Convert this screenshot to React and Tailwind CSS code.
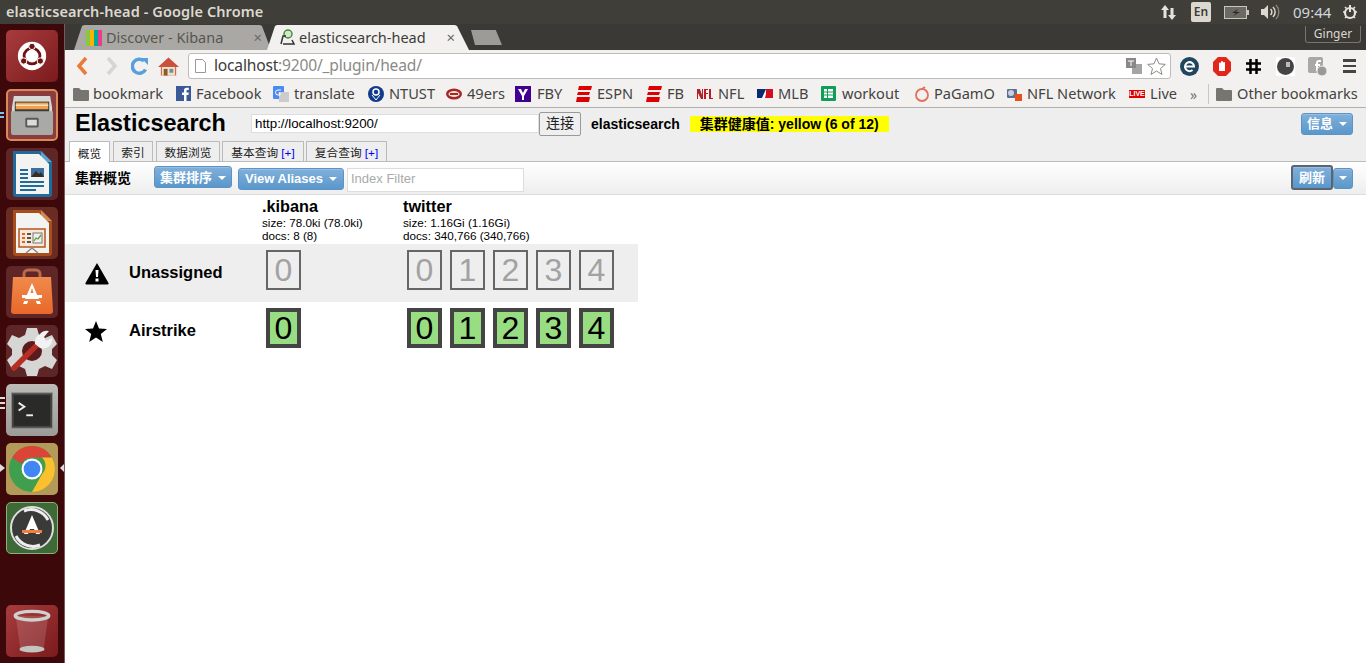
import React from "react";

const ubuntu = '"Noto Sans","Open Sans",sans-serif';

function Tile({ bg, ring, children }) {
  return (
    <div className={`w-[52px] h-[52px] rounded-[5px] flex items-center justify-center shrink-0 ${bg} ${ring || ""}`}>
      {children}
    </div>
  );
}

const UbuntuIcon = () => (
  <svg width="30" height="30" viewBox="0 0 36 36">
    <circle cx="18" cy="18" r="17" fill="#fff" />
    <circle cx="18" cy="18" r="9.5" fill="none" stroke="#6e1416" strokeWidth="3.4" />
    <circle cx="18" cy="6.500" r="3.8" fill="#6e1416" stroke="#fff" strokeWidth="1.2" />
    <circle cx="8" cy="24" r="3.8" fill="#6e1416" stroke="#fff" strokeWidth="1.2" />
    <circle cx="28" cy="24" r="3.8" fill="#6e1416" stroke="#fff" strokeWidth="1.2" />
  </svg>
);
const FilesIcon = () => (
  <svg width="42" height="44" viewBox="0 0 44 46">
    <path d="M3 3h38l2 12v28H1V15z" fill="#d8d8d4" />
    <rect x="4" y="9" width="36" height="12" fill="#3a3a38" />
    <rect x="5" y="10" width="34" height="7" fill="#f0a050" />
    <rect x="5" y="12" width="34" height="1.5" fill="#fbe6c0" />
    <path d="M0 19h44v22a3 3 0 0 1-3 3H3a3 3 0 0 1-3-3z" fill="#a9a9a6" />
    <rect x="15" y="26" width="14" height="10" rx="1.5" fill="#5a5a58" />
    <rect x="17" y="28" width="10" height="6" fill="#dcdcdc" />
  </svg>
);
const WriterIcon = () => (
  <svg width="42" height="48" viewBox="0 0 42 48">
    <path d="M2 1h28l11 11v32a3 3 0 0 1-3 3H5a3 3 0 0 1-3-3z" fill="#1f6b9c" />
    <path d="M30 1l11 11H30z" fill="#5aa6cf" />
    <path d="M5 4h23l10 10v30H5z" fill="#f3f3f1" />
    <path d="M9 20h8M9 24h8M9 28h8M9 32h24M9 36h24M9 40h16" stroke="#1f6b9c" strokeWidth="2" />
    <rect x="20" y="18" width="13" height="9" fill="#3b6fa0" />
    <path d="M20 27l5-6 3 3 2-2 3 5z" fill="#3a2d20" />
  </svg>
);
const ImpressIcon = () => (
  <svg width="42" height="48" viewBox="0 0 42 48">
    <path d="M2 1h28l11 11v32a3 3 0 0 1-3 3H5a3 3 0 0 1-3-3z" fill="#a84e1c" />
    <path d="M30 1l11 11H30z" fill="#cf8a55" />
    <path d="M5 4h23l10 10v30H5z" fill="#f3f3f1" />
    <rect x="8" y="20" width="26" height="18" fill="#fbe7d8" stroke="#b4551f" strokeWidth="1.5" />
    <path d="M11 25h3M11 29h3M11 33h3" stroke="#d9642a" strokeWidth="2" />
    <path d="M16 25h4M16 29h4M16 33h4" stroke="#555" strokeWidth="2" />
    <rect x="22" y="24" width="9" height="10" fill="#eee" stroke="#777" />
    <path d="M23 32l2-3 2 1 3-4" stroke="#5aa02c" strokeWidth="1.3" fill="none" />
    <path d="M15 44l6-5 6 5" stroke="#888" strokeWidth="1.5" fill="none" />
  </svg>
);
const StoreIcon = () => (
  <svg width="44" height="48" viewBox="0 0 44 48">
    <defs>
      <linearGradient id="bag" x1="0" y1="0" x2="0" y2="1">
        <stop offset="0" stopColor="#f08a4c" />
        <stop offset="1" stopColor="#e8682a" />
      </linearGradient>
    </defs>
    <path d="M14 10V6a4 4 0 0 1 4-4h8a4 4 0 0 1 4 4v4" fill="none" stroke="#b86a4a" strokeWidth="3" />
    <path d="M3 9h38l2 34a3 3 0 0 1-3 3H4a3 3 0 0 1-3-3z" fill="url(#bag)" />
    <path d="M22 15l-9 21h4l2-5h6l2 5h4z" fill="#fff" />
    <rect x="12" y="27" width="20" height="3" fill="#fff" />
    <rect x="12" y="31" width="20" height="2" fill="#ee7e3c" />
    <path d="M20.500 25h3L22 20z" fill="#ee7e3c" />
  </svg>
);
const SettingsIcon = () => (
  <svg width="50" height="50" viewBox="0 0 50 50">
    <path d="M20 2h10l2 7 6 3 7-3 5 9-5 5v6l5 5-5 9-7-3-6 3-2 7H20l-2-7-6-3-7 3-5-9 5-5v-6l-5-5 5-9 7 3 6-3z" fill="#d6d6d4" />
    <circle cx="25" cy="25" r="10" fill="#5b1a1c" />
    <path d="M7 42L31 18" stroke="#b52f24" strokeWidth="5.500" strokeLinecap="round" />
    <path d="M33 8a9 9 0 0 1 9-3l-5 6 2 4 6-3a9 9 0 0 1-12 10l-5-4a9 9 0 0 1 5-10z" fill="#f2f2f2" />
  </svg>
);
const TerminalIcon = () => (
  <svg width="42" height="37" viewBox="0 0 44 38">
    <rect x="0.5" y="0.5" width="43" height="37" fill="#444442" stroke="#8c8c88" />
    <rect x="3" y="3" width="38" height="32" fill="#2a2a28" />
    <path d="M8 11l6 4-6 4" stroke="#eee" strokeWidth="2" fill="none" />
    <path d="M16 24h7" stroke="#eee" strokeWidth="2" />
  </svg>
);
const ChromeIcon = ({ s = 46 }) => (
  <svg width={s} height={s} viewBox="0 0 44 44">
    <circle cx="22" cy="22" r="22" fill="#3f9f4f" />
    <path d="M22 0a22 22 0 0 1 19 11H22a11 11 0 0 0-10 6L3 11A22 22 0 0 1 22 0z" fill="#db4437" />
    <path d="M41 11a22 22 0 0 1-19 33l9.500-17a11 11 0 0 0 0-16z" fill="#fbc02d" />
    <circle cx="22" cy="22" r="10" fill="#fff" />
    <circle cx="22" cy="22" r="8" fill="#4285f4" />
  </svg>
);
const UpdaterIcon = () => (
  <svg width="44" height="44" viewBox="0 0 44 44">
    <circle cx="22" cy="22" r="21" fill="#3a3a38" stroke="#ddd" strokeWidth="2" />
    <path d="M22 9l-8 19h4l2-5h4l2 5h4z" fill="#fff" />
    <rect x="12" y="24" width="20" height="3" fill="#f08040" />
    <path d="M6 30a19 19 0 0 0 24 9" stroke="#eee" strokeWidth="3" fill="none" />
    <path d="M38 14A19 19 0 0 0 14 5" stroke="#eee" strokeWidth="3" fill="none" />
  </svg>
);
const TrashIcon = () => (
  <svg width="38" height="46" viewBox="0 0 38 48">
    <path d="M2 8l5 36q12 4 24 0l5-36z" fill="#ffffff" opacity="0.14" />
    <ellipse cx="19" cy="8" rx="17.500" ry="4.500" fill="none" stroke="#d0d0cc" strokeWidth="3.500" />
    <ellipse cx="19" cy="43" rx="13" ry="3.500" fill="#c4c4bf" />
  </svg>
);

const Folder = ({ c = "#77756f" }) => (
  <svg width="16" height="14" viewBox="0 0 16 14"><path d="M0 2a1 1 0 0 1 1-1h5l2 2h7a1 1 0 0 1 1 1v9a1 1 0 0 1-1 1H1a1 1 0 0 1-1-1z" fill={c} /></svg>
);
const Espn = () => (
  <svg width="16" height="16" viewBox="0 0 16 16"><path d="M3 0h13l-1 4H2zM2 6h12l-1 3H1zM1 11h13l-1 5H0z" fill="#d00" /></svg>
);
const bookmarks = [
  { w: 103, gap: 4, icon: <Folder />, t: "bookmark" },
  { w: 97, gap: 5, icon: <svg width="15" height="15" viewBox="0 0 15 15"><rect width="15" height="15" fill="#3b5998" /><path d="M10.500 15V9h2l.3-2.500h-2.300V5c0-.7.3-1 1-1h1.300V1.800h-2C8.700 1.800 8 3 8 4.700v1.800H6V9h2v6z" fill="#fff" /></svg>, t: "Facebook" },
  { w: 95, gap: 5, icon: <svg width="16" height="16" viewBox="0 0 16 16"><rect width="11" height="13" rx="1" fill="#4a8af4" /><rect x="6" y="6" width="10" height="10" fill="#ccc" /><path d="M8 4H5a2 2 0 0 0 0 5h2V7H5.500" stroke="#fff" fill="none" /></svg>, t: "translate" },
  { w: 78, gap: 5, icon: <svg width="16" height="16" viewBox="0 0 16 16"><circle cx="8" cy="8" r="8" fill="#123a8c" /><circle cx="8" cy="6" r="3" fill="none" stroke="#fff" strokeWidth="1.500" /><path d="M4 9l4 5 4-5" stroke="#fff" fill="none" /></svg>, t: "NTUST" },
  { w: 69, gap: 5, icon: <svg width="16" height="12" viewBox="0 0 16 12"><ellipse cx="8" cy="6" rx="8" ry="5.500" fill="#a8252c" /><ellipse cx="8" cy="6" rx="5.500" ry="3" fill="#f0e8d0" /><path d="M4 6h8" stroke="#a8252c" strokeWidth="2" /></svg>, t: "49ers" },
  { w: 61, gap: 6, icon: <svg width="16" height="16" viewBox="0 0 16 16"><rect width="16" height="16" fill="#400090" /><path d="M3 3h3l2 4 2-4h3l-4 7v4H7v-4z" fill="#fff" /></svg>, t: "FBY" },
  { w: 70, gap: 5, icon: <Espn />, t: "ESPN" },
  { w: 51, gap: 5, icon: <Espn />, t: "FB" },
  { w: 60, gap: 5, icon: <svg width="16" height="12" viewBox="0 0 16 12"><path d="M0 1h3l2 6V1h1v10H4L1 5v6H0zM7 1h4v1H9v3h2v1H9v5H7zM12 1h2v9h2v1h-4z" fill="#b3202a" /></svg>, t: "NFL" },
  { w: 64, gap: 5, icon: <svg width="16" height="9" viewBox="0 0 16 9"><rect width="16" height="9" fill="#fff" /><path d="M0 0h9L5 9H0z" fill="#0b2a6f" /><path d="M9 0h7v9H8l1-4z" fill="#d01020" /></svg>, t: "MLB" },
  { w: 93, gap: 6, icon: <svg width="15" height="15" viewBox="0 0 15 15"><rect width="15" height="15" rx="1" fill="#0f9d58" /><rect x="3" y="3" width="9" height="9" fill="#fff" /><path d="M3 6h9M3 9h9M6.500 3v9" stroke="#0f9d58" /></svg>, t: "workout" },
  { w: 92, gap: 4, icon: <svg width="16" height="16" viewBox="0 0 16 16"><circle cx="8" cy="9" r="6" fill="none" stroke="#e0725c" strokeWidth="1.800" /><path d="M8 3l3-2" stroke="#e0725c" strokeWidth="1.800" /></svg>, t: "PaGamO" },
  { w: 123, gap: 5, icon: <svg width="16" height="16" viewBox="0 0 16 16"><rect x="1" y="3" width="10" height="9" rx="1" fill="#5c6f90" /><circle cx="5" cy="7" r="3" fill="#c8d0de" /><rect x="9" y="8" width="7" height="7" fill="#e8501c" /></svg>, t: "NFL Network" },
  { w: 53, gap: 5, icon: <span className="w-[16px] h-[8px] bg-[#e00000] text-white text-[7px] leading-[8px] font-bold text-center [font-family:'Liberation_Sans',sans-serif]">LIVE</span>, t: "Live" },
];

const Caret = ({ className = "" }) => (
  <span className={`inline-block w-0 h-0 border-x-[4px] border-x-transparent border-t-[4px] border-t-white ${className}`} />
);

const BlueBtn = ({ children, className = "" }) => (
  <div className={`flex items-center justify-center gap-[6px] rounded-[3px] border border-[#5d93c4] bg-gradient-to-b from-[#80b0da] to-[#5a97cb] text-white font-bold text-[13px] shadow-[inset_0_1px_0_rgba(255,255,255,0.2)] ${className}`}>
    {children}
  </div>
);

const Shard = ({ n, on }) => (
  <div className={`w-[35px] h-[40px] flex items-center justify-center text-[32px] leading-none pb-[1px] mr-[8px] shrink-0 ${on ? "border-[4px] border-[#444] bg-[#98dd82] text-black" : "border-2 border-[#666] text-[#a2a2a2]"}`}>
    {n}
  </div>
);

const Row = ({ icon, label, gray }) => (
  <div className={`h-[58px] w-[573px] flex ${gray ? "bg-[#eeeeee]" : ""}`}>
    <div className="w-[64px] flex items-center pl-[20px]">{icon}</div>
    <div className="w-[133px] flex items-center pb-[2px] font-bold text-[16.500px] text-black">{label}</div>
    <div className="w-[141px] pt-[6px] pl-[4px] flex"><Shard n={0} on={!gray} /></div>
    <div className="pt-[6px] pl-[4px] flex">
      {[0, 1, 2, 3, 4].map((n) => <Shard key={n} n={n} on={!gray} />)}
    </div>
  </div>
);

export default function App() {
  return (
    <div className="w-[1366px] h-[663px] overflow-hidden flex flex-col bg-white [font-family:'Liberation_Sans','Noto_Sans_CJK_SC',sans-serif]">
      {/* top panel */}
      <div className="h-[24px] shrink-0 bg-[#3f3e39] flex items-center text-[#dcd8cf] relative" style={{ fontFamily: ubuntu }}>
        <span className="ml-[6px] text-[14.500px] font-semibold tracking-[0.1px]">elasticsearch-head - Google Chrome</span>
        <div className="ml-auto flex items-center">
          <svg width="17" height="17" viewBox="0 0 17 17"><path d="M5 1l4 5H6.500v8h-3V6H1zM12 16l-4-5h2.500V4h3v7H16z" fill="#e6e3dc" /></svg>
          <div className="ml-[14px] w-[20px] h-[20px] rounded-[2px] bg-[#dcd8d0] text-[#3c3b37] text-[12px] font-semibold flex items-center justify-center">En</div>
          <svg className="ml-[13px]" width="25" height="13" viewBox="0 0 25 13"><rect x="0.500" y="0.500" width="22" height="12" fill="#6a6964" stroke="#c8c5bd" /><rect x="23" y="4" width="2" height="5" fill="#c8c5bd" /><path d="M14 3l-6 4h4l-3 3 7-4h-4z" fill="#2c2b28" /></svg>
          <svg className="ml-[11px]" width="20" height="16" viewBox="0 0 20 16"><path d="M1 5h3l4-4v14l-4-4H1z" fill="#dcd8cf" /><path d="M10.500 5a4 4 0 0 1 0 6M13 3a7 7 0 0 1 0 10" stroke="#dcd8cf" strokeWidth="1.500" fill="none" /><path d="M16 1a10 10 0 0 1 0 14" stroke="#8b8981" strokeWidth="1.300" fill="none" /></svg>
          <span className="ml-[13px] w-[36px] text-[15px] leading-none text-[#cfd6de]">09:44</span>
          <svg className="ml-[13px] mr-[8px]" width="16" height="16" viewBox="0 0 16 16"><circle cx="8" cy="9" r="5" fill="none" stroke="#e6e3dc" strokeWidth="2.200" /><path d="M8 1v7" stroke="#e6e3dc" strokeWidth="2" /><path d="M1 8h2M13 8h2M3 3l1.500 1.500M13 3l-1.500 1.500M3 14l1.500-1.500M13 14l-1.500-1.500" stroke="#e6e3dc" strokeWidth="1.600" /></svg>
        </div>
      </div>

      <div className="flex flex-1 min-h-0">
        {/* launcher */}
        <div className="w-[65px] shrink-0 bg-[#3c0809] border-r border-[#7a5a5a] pl-[6px] pt-[6px] pb-[6px] flex flex-col gap-[7px] relative">
          <Tile bg="bg-gradient-to-br from-[#a83c3e] to-[#7b1a1c]"><UbuntuIcon /></Tile>
          <Tile bg="bg-[#8a3d3e]" ring="border-2 border-[#d98a58]"><FilesIcon /></Tile>
          <Tile bg="bg-[#5f2628]"><WriterIcon /></Tile>
          <Tile bg="bg-[#6a2c22]"><ImpressIcon /></Tile>
          <Tile bg="bg-[#5f2628]"><StoreIcon /></Tile>
          <Tile bg="bg-[#5f2628]"><SettingsIcon /></Tile>
          <Tile bg="bg-gradient-to-b from-[#bdbbb7] to-[#9d9b97]"><TerminalIcon /></Tile>
          <Tile bg="bg-[#b49a58]"><ChromeIcon /></Tile>
          <Tile bg="bg-[#3f6a38]" ring="border border-[#8ab080]"><UpdaterIcon /></Tile>
          <div className="mt-auto"><Tile bg="bg-gradient-to-br from-[#a83c3e] to-[#7b1a1c]"><TrashIcon /></Tile></div>
          <span className="absolute left-0 top-[88px] w-[4px] h-[2px] bg-[#7ec0ee] shadow-[0_4px_0_#7ec0ee]" />
          <span className="absolute left-0 top-[373px] w-[5px] h-[2px] bg-[#ddd] shadow-[0_5px_0_#ddd,0_10px_0_#ddd]" />
          <span className="absolute left-0 top-[440px] w-0 h-0 border-y-[4px] border-y-transparent border-l-[5px] border-l-[#ddd]" />
          <span className="absolute left-[60px] top-[440px] w-0 h-0 border-y-[4px] border-y-transparent border-r-[4px] border-r-[#ddd]" />
        </div>

        <div className="flex-1 min-w-0 flex flex-col">
          {/* tab strip */}
          <div className="h-[26px] shrink-0 bg-[#3a3935] flex items-end pl-[9px] relative" style={{ fontFamily: ubuntu }}>
            <div className="w-[197px] h-[25px] bg-[#a9a8a5] [clip-path:polygon(0_100%,8px_1px,10px_0,186px_0,188px_1px,100%_100%)] flex items-center pl-[12px] text-[14.500px] text-[#58564f]">
              <span className="flex w-[16px] h-[16px] mr-[4px]">
                <i className="flex-1 bg-[#8cc63f]" /><i className="flex-1 bg-[#f7b500]" /><i className="flex-1 bg-[#00a89c]" /><i className="flex-1 bg-[#ed3b8c]" />
              </span>
              Discover - Kibana
              <span className="ml-auto mr-[9px] text-[15px] text-[#6a6964]">×</span>
            </div>
            <div className="w-[202px] h-[25px] -ml-[4px] bg-[#f2f1f0] [clip-path:polygon(0_100%,8px_1px,10px_0,188px_0,190px_1px,100%_100%)] flex items-center pl-[12px] text-[14.500px] text-[#3c3b37] relative">
              <svg className="mr-[4px]" width="16" height="17" viewBox="0 0 16 17"><circle cx="9" cy="5" r="4" fill="#cfe8c8" stroke="#4f8a43" strokeWidth="1.500" /><path d="M2 15l2-8h3M4 15h11l-2-4" stroke="#333" strokeWidth="1.500" fill="none" /></svg>
              elasticsearch-head
              <span className="ml-auto mr-[14px] text-[15px] text-[#6a6964]">×</span>
            </div>
            <div className="ml-[2px] mb-[5px] w-[31px] h-[15px] bg-[#9c9b97] [clip-path:polygon(4px_100%,0_0,80%_0,100%_100%)]" />
            <div className="absolute right-[5px] top-[2px] w-[56px] h-[17px] rounded-b-[3px] border border-t-0 border-[#77756f] text-[12px] leading-[16px] text-center text-[#dcd8cf]">Ginger</div>
          </div>

          {/* toolbar */}
          <div className="h-[30px] shrink-0 bg-[#f2f1f0] flex items-center pt-[2px]" style={{ fontFamily: ubuntu }}>
            <svg className="ml-[10px]" width="14" height="20" viewBox="0 0 14 20"><path d="M11 2L4 10l7 8" stroke="#e87a3a" strokeWidth="3.500" fill="none" /></svg>
            <svg className="ml-[16px]" width="14" height="20" viewBox="0 0 14 20"><path d="M3 2l7 8-7 8" stroke="#d6d5d2" strokeWidth="3.500" fill="none" /></svg>
            <svg className="ml-[12px]" width="18" height="18" viewBox="0 0 18 18"><path d="M14.500 12.500A7 7 0 1 1 13 4" stroke="#5a9fdc" strokeWidth="3.500" fill="none" /><path d="M10 1h7v7z" fill="#5a9fdc" /></svg>
            <svg className="ml-[9px]" width="21" height="21" viewBox="0 0 22 21"><path d="M11 1L0 11h3v9h16v-9h3z" fill="#c8503c" /><rect x="4" y="11" width="14" height="9" fill="#f0e0c0" /><rect x="6" y="13" width="4" height="7" fill="#8a5a30" /><rect x="12" y="13" width="4" height="4" fill="#6a90b0" /></svg>
            <div className="ml-[9px] w-[983px] h-[26px] bg-white border border-[#bdbcb8] rounded-[3px] flex items-center pl-[6px] pr-[4px]">
              <svg width="11" height="14" viewBox="0 0 11 14"><path d="M.5.500h7l3 3v10H.500z" fill="#fff" stroke="#999" /></svg>
              <span className="ml-[8px] text-[15.600px] text-[#3c3b37] tracking-[-0.2px]">localhost<span className="text-[#8b8a86]">:9200/_plugin/head/</span></span>
              <svg className="ml-auto" width="16" height="16" viewBox="0 0 16 16"><rect x="6" y="6" width="10" height="10" fill="#a5a5a5" /><rect width="10" height="10" fill="#888" /><path d="M2 3h6M5 3v5" stroke="#fff" /></svg>
              <svg className="ml-[5px]" width="19" height="18" viewBox="0 0 19 18"><path d="M9.500 1l2.500 5.800 6.300.6-4.800 4.100 1.500 6L9.500 14l-5.500 3.500 1.500-6L.700 7.400 7 6.800z" fill="#fff" stroke="#8b8a86" /></svg>
            </div>
            <svg className="ml-[9px]" width="19" height="19" viewBox="0 0 19 19"><circle cx="9.500" cy="9.500" r="9.500" fill="#20465e" /><path d="M5 9.500h9a4.500 4.500 0 1 0-1.500 3.500" stroke="#fff" strokeWidth="2" fill="none" /></svg>
            <svg className="ml-[14px]" width="18" height="19" viewBox="0 0 18 19"><path d="M5 0h8l5 5v9l-5 5H5l-5-5V5z" fill="#e2261c" /><path d="M6 14V6.500a1 1 0 0 1 2 0V9V5a1 1 0 0 1 2 0v4-3a1 1 0 0 1 2 0v8z" fill="#fff" /></svg>
            <svg className="ml-[14px]" width="17" height="17" viewBox="0 0 17 17"><path d="M5.500 1v15M11.500 1v15M1 5.500h15M1 11.500h15" stroke="#000" strokeWidth="2.500" /></svg>
            <svg className="ml-[14px]" width="19" height="19" viewBox="0 0 19 19"><rect width="19" height="19" fill="#fff" /><circle cx="9.500" cy="9.500" r="8.500" fill="#444" /><rect x="10" y="5" width="4" height="5" fill="#bbb" /></svg>
            <svg className="ml-[13px]" width="19" height="19" viewBox="0 0 19 19"><rect width="15" height="16" rx="2" fill="#a9a8a5" /><path d="M9 14V6q0-2 2-2h2M7 8h5" stroke="#fff" strokeWidth="2" fill="none" /><circle cx="14" cy="14" r="5" fill="#999" stroke="#eee" /></svg>
            <div className="ml-[16px] w-[13px] flex flex-col gap-[3px]">
              <i className="h-[2.500px] bg-[#444]" /><i className="h-[2.500px] bg-[#444]" /><i className="h-[2.500px] bg-[#444]" />
            </div>
          </div>

          {/* bookmarks */}
          <div className="h-[28px] shrink-0 bg-[#f2f1f0] border-b border-[#b0afab] flex items-center pl-[8px] pt-[1px] text-[14.600px] text-[#44433f]" style={{ fontFamily: ubuntu }}>
            {bookmarks.map((b) => (
              <div key={b.t} className="flex items-center shrink-0" style={{ width: b.w, gap: b.gap }}>
                {b.icon}
                <span className="whitespace-nowrap">{b.t}</span>
              </div>
            ))}
            <span className="ml-[8px] w-[18px] text-[#77756f] text-[14px]">»</span>
            <span className="w-px h-[20px] bg-[#c8c7c3]" />
            <div className="ml-[7px] flex items-center gap-[5px] whitespace-nowrap"><Folder />Other bookmarks</div>
          </div>

          {/* page header */}
          <div className="h-[54px] shrink-0 bg-[#eeeeee] border-b border-[#bbb] flex flex-col">
            <div className="h-[31px] shrink-0 flex items-center relative">
              <span className="ml-[10px] w-[176px] text-[23.400px] font-bold text-black leading-none">Elasticsearch</span>
              <input readOnly value="http://localhost:9200/" className="w-[288px] h-[19px] bg-white border border-[#ddd] px-[3px] text-[13.300px] text-black outline-none" />
              <button className="w-[42px] h-[24px] bg-[#efefef] border border-[#999] rounded-[2px] text-[14px] text-[#222]">连接</button>
              <span className="ml-[10px] mt-[2px] text-[14px] font-bold text-black">elasticsearch</span>
              <span className="ml-[10px] w-[199px] h-[16px] bg-[#ffff00] text-[14px] leading-[16px] font-bold text-black text-center">集群健康值: yellow (6 of 12)</span>
              <BlueBtn className="ml-auto mr-[13px] w-[52px] h-[22px]">信息<Caret /></BlueBtn>
            </div>
            <div className="flex-1 flex items-end pl-[4px] gap-[2px] text-[11.700px] text-[#222]">
              <div className="w-[41px] h-[21px] -mb-px mr-[1px] pt-[3px] bg-white border border-b-0 border-[#bbb] flex items-center justify-center relative z-10">概览</div>
              <div className="w-[40px] h-[20px] mr-[1px] pt-[3px] border border-b-0 border-[#bbb] flex items-center justify-center">索引</div>
              <div className="w-[64px] h-[20px] pt-[3px] border border-b-0 border-[#bbb] flex items-center justify-center">数据浏览</div>
              <div className="w-[82px] h-[20px] pt-[3px] border border-b-0 border-[#bbb] flex items-center justify-center">基本查询&nbsp;<span className="text-[#00f]">[+]</span></div>
              <div className="w-[81px] h-[20px] pt-[3px] border border-b-0 border-[#bbb] flex items-center justify-center">复合查询&nbsp;<span className="text-[#00f]">[+]</span></div>
            </div>
          </div>

          {/* page toolbar */}
          <div className="h-[33px] shrink-0 bg-gradient-to-b from-white to-[#eeeeee] border-b border-[#ddd] flex items-center">
            <span className="ml-[10px] w-[79px] text-[14px] font-bold text-black">集群概览</span>
            <BlueBtn className="w-[78px] h-[22px] -mt-[2px] pt-[1px]">集群排序<Caret /></BlueBtn>
            <BlueBtn className="ml-[6px] w-[106px] h-[22px] mt-[2px]">View Aliases<Caret /></BlueBtn>
            <input readOnly placeholder="Index Filter" className="ml-[3px] w-[177px] h-[24px] mt-[4px] pb-[3px] bg-white border border-[#ddd] px-[3px] text-[13px] placeholder:text-[#aaa] outline-none" />
            <div className="ml-auto mr-[13px] flex items-center">
              <BlueBtn className="w-[42px] h-[25px] border-2 !border-[#5a6570] -mt-[1px]">刷新</BlueBtn>
              <BlueBtn className="w-[20px] h-[21px]"><Caret /></BlueBtn>
            </div>
          </div>

          {/* overview table */}
          <div className="flex-1 bg-white">
            <div className="h-[49px] flex text-black">
              <div className="w-[197px]" />
              <div className="w-[141px] text-[11.700px] leading-[13px] pt-[3px]">
                <div className="text-[16.250px] leading-[16px] font-bold mb-[2px]">.kibana</div>
                <div>size: 78.0ki (78.0ki)</div>
                <div>docs: 8 (8)</div>
              </div>
              <div className="text-[11.700px] leading-[13px] pt-[3px]">
                <div className="text-[16.250px] leading-[16px] font-bold mb-[2px]">twitter</div>
                <div>size: 1.16Gi (1.16Gi)</div>
                <div>docs: 340,766 (340,766)</div>
              </div>
            </div>
            <Row gray label="Unassigned" icon={
              <svg width="24" height="23" viewBox="0 0 24 23"><path d="M12 1L23.500 21a1 1 0 0 1-1 1.500h-21a1 1 0 0 1-1-1.500z" fill="#000" /><path d="M10.500 8h3l-.5 7h-2zM10.500 16.500h3v3h-3z" fill="#fff" /></svg>
            } />
            <Row label="Airstrike" icon={
              <svg width="22" height="21" viewBox="0 0 22 21"><path d="M11 0l3 7.500 8 .5-6.200 5 2 8L11 16.600 4.200 21l2-8L0 8l8-.5z" fill="#000" /></svg>
            } />
          </div>
        </div>
      </div>
    </div>
  );
}
